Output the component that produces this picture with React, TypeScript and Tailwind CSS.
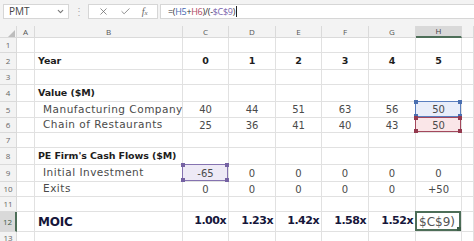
import React from 'react';
import { X, Check, ChevronDown } from 'lucide-react';

type Mark = 'blue' | 'red' | 'purple' | 'active';

type Cell = {
  v?: string;
  bold?: boolean;
  big?: boolean;
  indent?: boolean;
  label?: boolean;
  align?: 'left' | 'center' | 'right';
  mark?: Mark;
};

const colLetters = ['', 'A', 'B', 'C', 'D', 'E', 'F', 'G', 'H', ''];

const row = (label: Cell | null, vals: (string | Cell)[], base: Partial<Cell> = {}): Cell[] => {
  const out: Cell[] = [{}, {}, label ? { ...label, label: true } : {}];
  for (let i = 0; i < 6; i++) {
    const v = vals[i];
    if (v === undefined) out.push({});
    else if (typeof v === 'string') out.push({ v, align: 'center', ...base });
    else out.push({ align: 'center', ...base, ...v });
  }
  out.push({});
  return out;
};

const rows: Cell[][] = [
  row(null, []),
  row({ v: 'Year', bold: true }, ['0', '1', '2', '3', '4', '5'], { bold: true }),
  row(null, []),
  row({ v: 'Value ($M)', bold: true }, []),
  row({ v: 'Manufacturing Company', indent: true }, ['40', '44', '51', '63', '56', { v: '50', mark: 'blue' }]),
  row({ v: 'Chain of Restaurants', indent: true }, ['25', '36', '41', '40', '43', { v: '50', mark: 'red' }]),
  row(null, []),
  row({ v: "PE Firm's Cash Flows ($M)", bold: true }, []),
  row({ v: 'Initial Investment', indent: true }, [{ v: '-65', mark: 'purple' }, '0', '0', '0', '0', '0']),
  row({ v: 'Exits', indent: true }, ['0', '0', '0', '0', '0', '+50']),
  row(null, []),
  row(
    { v: 'MOIC', bold: true, big: true },
    ['1.00x', '1.23x', '1.42x', '1.58x', '1.52x', { v: '$C$9)', mark: 'active', bold: false, align: 'left' }],
    { bold: true, big: true, align: 'right' }
  ),
  row(null, []),
];

const markStyle: Record<Mark, { box: string; dot: string; bg: string }> = {
  blue: { box: 'border-[#5b7fbf]', dot: 'bg-[#4a6fb0]', bg: 'bg-[#e9eefa]' },
  red: { box: 'border-[#a3485c]', dot: 'bg-[#94394e]', bg: 'bg-[#fae6e8]' },
  purple: { box: 'border-[#8573b0]', dot: 'bg-[#7562a3]', bg: 'bg-[#eeeaf6]' },
  active: { box: 'border-[#4d6e58]', dot: 'bg-[#3d5e48]', bg: 'bg-white' },
};

const textClass = (cell: Cell) => {
  if (cell.mark === 'active') return 'text-[12px] text-[#555]';
  if (cell.label) {
    if (cell.big) return 'text-[12px] tracking-[-0.2px] font-bold text-[#16163a]';
    if (cell.bold) return 'text-[9.5px] tracking-[-0.1px] font-bold text-[#1d1d1d]';
    return 'text-[10.5px] tracking-[0.5px] text-[#4a4a4a]';
  }
  if (cell.big) return 'text-[11px] tracking-[-0.5px] font-bold text-[#16163a]';
  if (cell.bold) return 'text-[9.5px] font-bold text-[#1d1d1d]';
  return 'text-[10px] text-[#4a4a4a]';
};

const Corners: React.FC<{ dot: string; all: boolean }> = ({ dot, all }) => (
  <>
    {all && <span className={`absolute -left-[2px] -top-[2px] w-[4px] h-[4px] ${dot}`} />}
    {all && <span className={`absolute -right-[2px] -top-[2px] w-[4px] h-[4px] ${dot}`} />}
    {all && <span className={`absolute -left-[2px] -bottom-[2px] w-[4px] h-[4px] ${dot}`} />}
    <span className={`absolute -right-[2px] -bottom-[2px] w-[4px] h-[4px] ${dot}`} />
  </>
);

const App: React.FC = () => {
  return (
    <div className="w-[474px] h-[241px] overflow-hidden bg-white font-['DejaVu_Sans',sans-serif]">
      {/* formula bar */}
      <div className="h-[26px] bg-[#f3f3f3] flex items-start pt-[4px] pl-[3px] font-['Open_Sans',sans-serif]">
        <div className="w-[66px] h-[15px] bg-white border border-[#d6d6d6] flex items-center justify-between pl-[5px] pr-[3px] text-[10px] text-[#444]">
          <span>PMT</span>
          <ChevronDown className="w-[9px] h-[9px] text-[#777]" strokeWidth={3} />
        </div>
        <div className="w-[19px] h-[15px] flex items-center justify-center text-[10px] text-[#aaa]">⋮</div>
        <div className="w-[70px] h-[15px] bg-white border border-[#d6d6d6] flex items-center justify-around px-[4px] text-[#666]">
          <X className="w-[11px] h-[11px]" strokeWidth={1.6} />
          <Check className="w-[11px] h-[11px]" strokeWidth={1.6} />
          <span className="font-['Liberation_Serif',serif] italic text-[10px] leading-none">
            f<span className="text-[7px]">x</span>
          </span>
        </div>
        <div className="ml-[2px] flex-1 h-[15px] bg-white border border-[#d6d6d6] border-r-0 flex items-center pl-[7px] text-[9px] text-[#333] tracking-[-0.3px]">
          <span>=(</span>
          <span className="text-[#4468b0]">H5</span>
          <span>+</span>
          <span className="text-[#b0485e]">H6</span>
          <span>)/(-</span>
          <span className="text-[#7a66ad]">$C$9</span>
          <span>)</span>
          <span className="ml-[1px] w-[1px] h-[11px] bg-[#222]" />
        </div>
      </div>

      {/* sheet */}
      <div className="grid h-[215px] grid-cols-[17px_18px_148px_46px_47px_46px_47px_47px_46px_1fr] grid-rows-[12px_15px_17px_15px_17px_16px_15px_15px_17px_17px_15px_15px_20px_1fr]">
        {colLetters.map((c, i) => (
          <div
            key={`h${i}`}
            className={`flex items-center justify-center text-[8px] font-['Open_Sans',sans-serif] border-r border-[#dadada] ${
              c === 'H'
                ? 'bg-[#d9d9d9] text-[#444] border-b-2 border-b-[#4d6e58]'
                : 'bg-[#f3f3f3] text-[#555] border-b'
            }`}
          >
            {i === 0 ? (
              <span className="mt-[4px] ml-[6px] w-0 h-0 border-l-[7px] border-l-transparent border-b-[7px] border-b-[#bdbdbd]" />
            ) : (
              c
            )}
          </div>
        ))}
        {rows.map((r, ri) =>
          r.map((cell, ci) => {
            if (ci === 0) {
              const active = ri === 11;
              return (
                <div
                  key={`${ri}-${ci}`}
                  className={`flex items-center justify-center text-[8px] font-['Open_Sans',sans-serif] border-b border-[#dadada] ${
                    active
                      ? 'bg-[#d9d9d9] text-[#3d5e48] border-r-2 border-r-[#4d6e58]'
                      : 'bg-[#f3f3f3] text-[#666] border-r'
                  }`}
                >
                  {ri + 1}
                </div>
              );
            }
            const m = cell.mark ? markStyle[cell.mark] : null;
            const align =
              cell.align === 'center' ? 'justify-center' : cell.align === 'right' ? 'justify-end pr-[2px]' : 'justify-start pl-[3px]';
            return (
              <div
                key={`${ri}-${ci}`}
                className={`relative flex items-center whitespace-nowrap border-r border-b border-[#e1e1e1] ${align} ${
                  m ? m.bg : ''
                } ${cell.indent ? 'pl-[8px]' : ''} ${textClass(cell)}`}
              >
                {cell.v}
                {m && (
                  <span
                    className={`absolute -left-[1px] -top-[1px] right-0 bottom-0 ${m.box} ${
                      cell.mark === 'active' ? 'border-2' : 'border-[1.5px]'
                    }`}
                  >
                    <Corners dot={m.dot} all={cell.mark !== 'active'} />
                  </span>
                )}
              </div>
            );
          })
        )}
      </div>
    </div>
  );
};

export default App;
